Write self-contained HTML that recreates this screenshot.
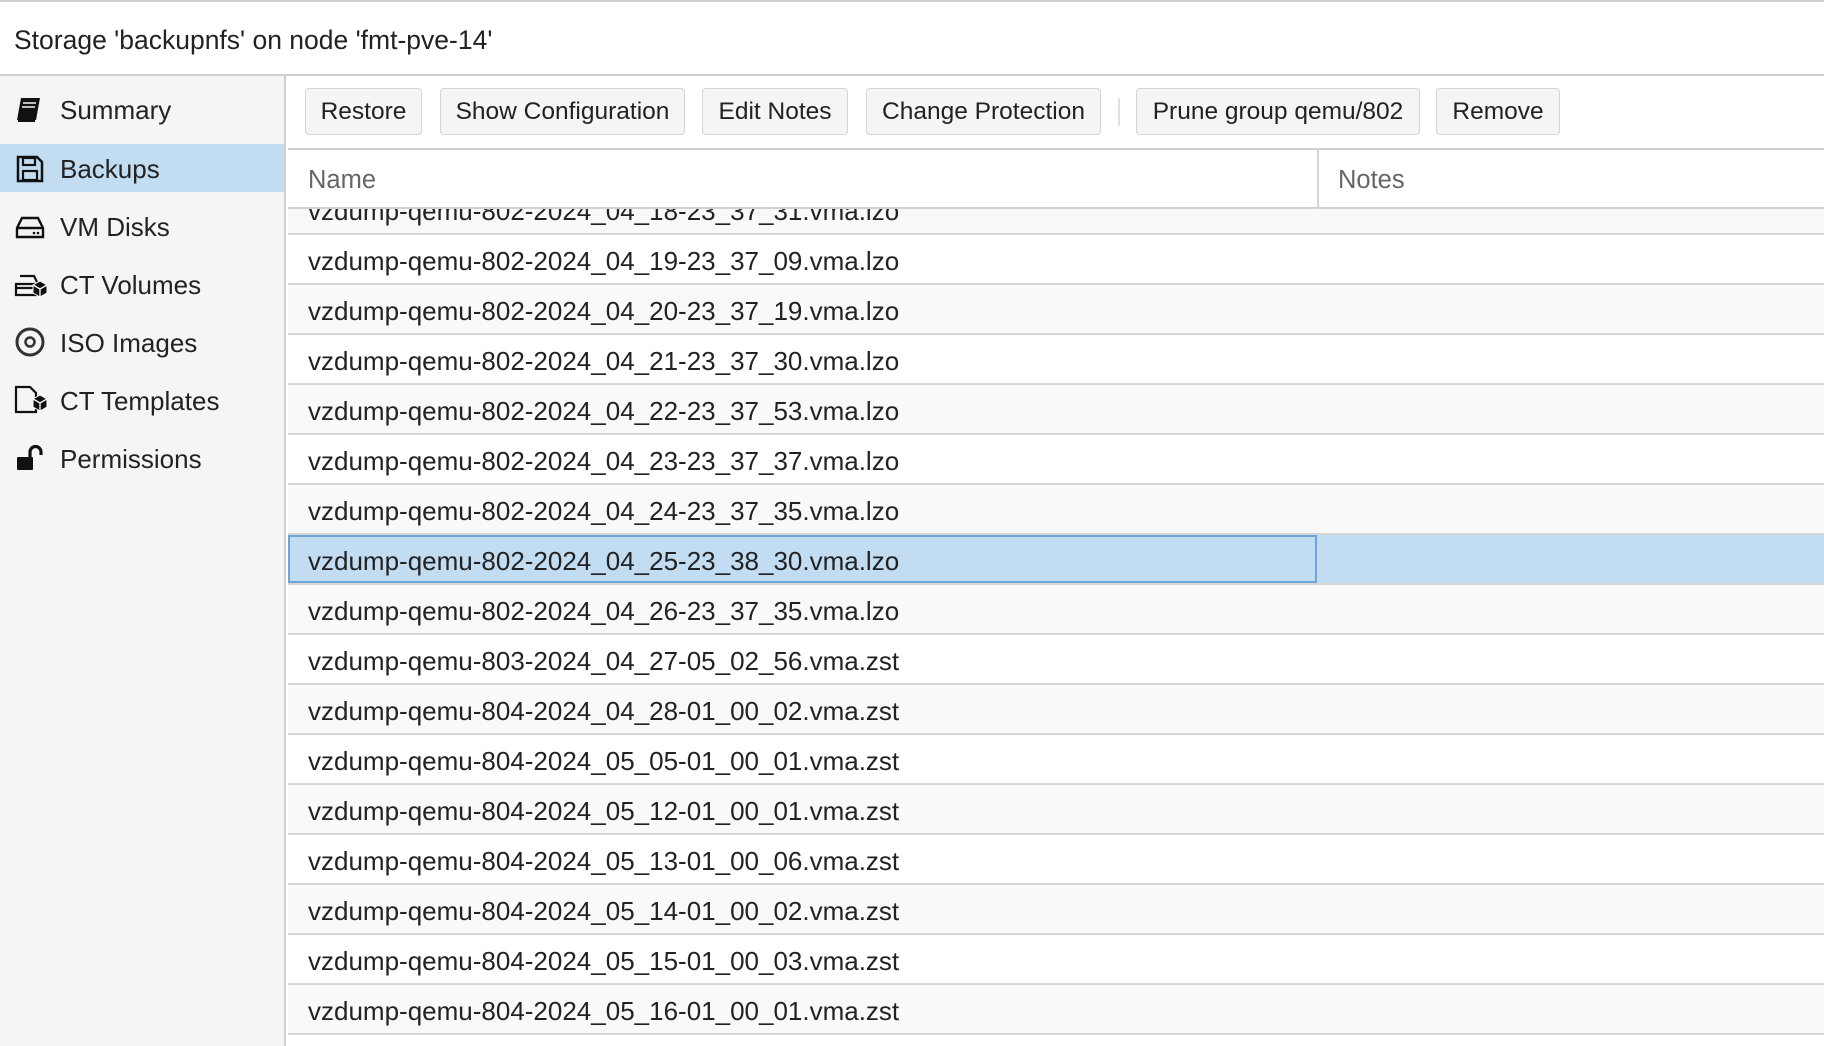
<!DOCTYPE html>
<html><head><meta charset="utf-8">
<style>
*{box-sizing:border-box;margin:0;padding:0}
body{width:1824px;height:1046px;overflow:hidden;background:#fff;font-family:"Liberation Sans",Helvetica,Arial,sans-serif;color:#1a1a1a;position:relative}
.topline{position:absolute;left:0;top:0;width:1824px;height:2px;background:#d0d0d0}
.title{position:absolute;left:14px;top:22px;font-size:26.5px;line-height:36px;color:#222}
.hdrline{position:absolute;left:0;top:74px;width:1824px;height:2px;background:#d0d0d0}
.side{position:absolute;left:0;top:76px;width:286px;height:970px;background:#f5f5f5;border-right:2px solid #d0d0d0}
.item{position:absolute;left:0;width:284px;height:48px;font-size:26px;line-height:48px;color:#222}
.item .t{position:absolute;left:60px;top:1px}
.item svg{position:absolute;left:14px;top:10px}
.sel{background:#c2dcf2}
.btn{position:absolute;top:88px;height:47px;border:1.5px solid #d4d4d4;border-radius:4px;background:#f5f5f5;font-size:24.5px;line-height:46px;text-align:center;color:#222}
.sep{position:absolute;left:1118px;top:98px;width:2px;height:28px;background:#e0e0e0}
.tline{position:absolute;left:288px;top:148px;width:1536px;height:2px;background:#d0d0d0}
.gh{position:absolute;left:288px;top:150px;width:1536px;height:59px;background:#fff;border-bottom:2px solid #d0d0d0;font-size:25.5px;color:#666;z-index:2}
.gh .n{position:absolute;left:20px;top:16px}
.gh .o{position:absolute;left:1050px;top:16px}
.gh .d{position:absolute;left:1029px;top:0;width:2px;height:59px;background:#d6d6d6}
.rows{position:absolute;left:288px;top:150px;width:1536px;height:896px;overflow:hidden}
.r{position:absolute;left:0;width:1536px;height:50px;border-bottom:2px solid #d6d6d6;font-size:26px;line-height:48px;padding-left:20px;padding-top:2px;color:#222}
.g{background:#f9f9f9}
.s{background:#c2dcf2}
.s .b{position:absolute;left:0;top:0;width:1029px;height:48px;border:2px solid #6fa4d6}
.s span{position:relative}
</style></head><body>
<div class="topline"></div>
<div class="title">Storage 'backupnfs' on node 'fmt-pve-14'</div>
<div class="hdrline"></div>
<div class="side">
 <div class="item" style="top:9px"><svg width="32" height="30" viewBox="0 0 32 30"><path d="M7 3h19l-4 22H3z" fill="#111"/><path d="M9 8h13M8 12h13" stroke="#f5f5f5" stroke-width="1.5"/><path d="M4 26h17" stroke="#111" stroke-width="2"/></svg><span class="t">Summary</span></div>
 <div class="item sel" style="top:68px"><svg width="32" height="30" viewBox="0 0 32 30"><path d="M4 3h19l5 5v19H4z" fill="none" stroke="#111" stroke-width="2.5"/><rect x="9" y="4" width="12" height="7" fill="none" stroke="#111" stroke-width="2.2"/><rect x="9" y="17" width="14" height="9" fill="none" stroke="#111" stroke-width="2.2"/></svg><span class="t">Backups</span></div>
 <div class="item" style="top:126px"><svg width="32" height="30" viewBox="0 0 32 30"><path d="M8 6h16l5 10v9H3v-9z M3 16h26" fill="none" stroke="#111" stroke-width="2.4"/><circle cx="24" cy="21" r="1.3" fill="#111"/><circle cx="20" cy="21" r="1.3" fill="#111"/></svg><span class="t">VM Disks</span></div>
 <div class="item" style="top:184px"><svg width="36" height="30" viewBox="0 0 36 30"><path d="M6 6h14l4 8M2 14h20v11H2z M2 18h18" fill="none" stroke="#111" stroke-width="2.2"/><path d="M26 11l7 4v8l-7 4-7-4v-8z" fill="#111" stroke="#fff" stroke-width="1"/><path d="M19 15l7 4 7-4M26 19v8" stroke="#fff" stroke-width="1.3" fill="none"/></svg><span class="t">CT Volumes</span></div>
 <div class="item" style="top:242px"><svg width="32" height="32" viewBox="0 0 32 32" style="top:8px"><circle cx="16" cy="16" r="13" fill="none" stroke="#333" stroke-width="3"/><circle cx="16" cy="16" r="4.5" fill="none" stroke="#333" stroke-width="2.5"/></svg><span class="t">ISO Images</span></div>
 <div class="item" style="top:300px"><svg width="36" height="32" viewBox="0 0 36 32" style="top:8px"><path d="M2 3h14l6 6v19H2z" fill="none" stroke="#111" stroke-width="2.2"/><path d="M26 11l7 4v8l-7 4-7-4v-8z" fill="#111" stroke="#fff" stroke-width="1"/><path d="M19 15l7 4 7-4M26 19v8" stroke="#fff" stroke-width="1.3" fill="none"/></svg><span class="t">CT Templates</span></div>
 <div class="item" style="top:358px"><svg width="32" height="30" viewBox="0 0 32 30"><rect x="3" y="13" width="16" height="13" rx="1" fill="#111"/><path d="M16 13V8a5.5 5.5 0 0 1 11 0v3" fill="none" stroke="#111" stroke-width="3.2"/></svg><span class="t">Permissions</span></div>
</div>
<div class="btn" style="left:305px;width:117px">Restore</div>
<div class="btn" style="left:440px;width:245px">Show Configuration</div>
<div class="btn" style="left:702px;width:146px">Edit Notes</div>
<div class="btn" style="left:866px;width:235px">Change Protection</div>
<div class="sep"></div>
<div class="btn" style="left:1136px;width:284px">Prune group qemu/802</div>
<div class="btn" style="left:1436px;width:124px">Remove</div>
<div class="tline"></div>
<div class="gh"><span class="n">Name</span><div class="d"></div><span class="o">Notes</span></div>
<div class="rows">
 <div class="r g" style="top:35px">vzdump-qemu-802-2024_04_18-23_37_31.vma.lzo</div>
 <div class="r" style="top:85px">vzdump-qemu-802-2024_04_19-23_37_09.vma.lzo</div>
 <div class="r g" style="top:135px">vzdump-qemu-802-2024_04_20-23_37_19.vma.lzo</div>
 <div class="r" style="top:185px">vzdump-qemu-802-2024_04_21-23_37_30.vma.lzo</div>
 <div class="r g" style="top:235px">vzdump-qemu-802-2024_04_22-23_37_53.vma.lzo</div>
 <div class="r" style="top:285px">vzdump-qemu-802-2024_04_23-23_37_37.vma.lzo</div>
 <div class="r g" style="top:335px">vzdump-qemu-802-2024_04_24-23_37_35.vma.lzo</div>
 <div class="r s" style="top:385px"><div class="b"></div><span>vzdump-qemu-802-2024_04_25-23_38_30.vma.lzo</span></div>
 <div class="r g" style="top:435px">vzdump-qemu-802-2024_04_26-23_37_35.vma.lzo</div>
 <div class="r" style="top:485px">vzdump-qemu-803-2024_04_27-05_02_56.vma.zst</div>
 <div class="r g" style="top:535px">vzdump-qemu-804-2024_04_28-01_00_02.vma.zst</div>
 <div class="r" style="top:585px">vzdump-qemu-804-2024_05_05-01_00_01.vma.zst</div>
 <div class="r g" style="top:635px">vzdump-qemu-804-2024_05_12-01_00_01.vma.zst</div>
 <div class="r" style="top:685px">vzdump-qemu-804-2024_05_13-01_00_06.vma.zst</div>
 <div class="r g" style="top:735px">vzdump-qemu-804-2024_05_14-01_00_02.vma.zst</div>
 <div class="r" style="top:785px">vzdump-qemu-804-2024_05_15-01_00_03.vma.zst</div>
 <div class="r g" style="top:835px">vzdump-qemu-804-2024_05_16-01_00_01.vma.zst</div>
</div>
</body></html>
